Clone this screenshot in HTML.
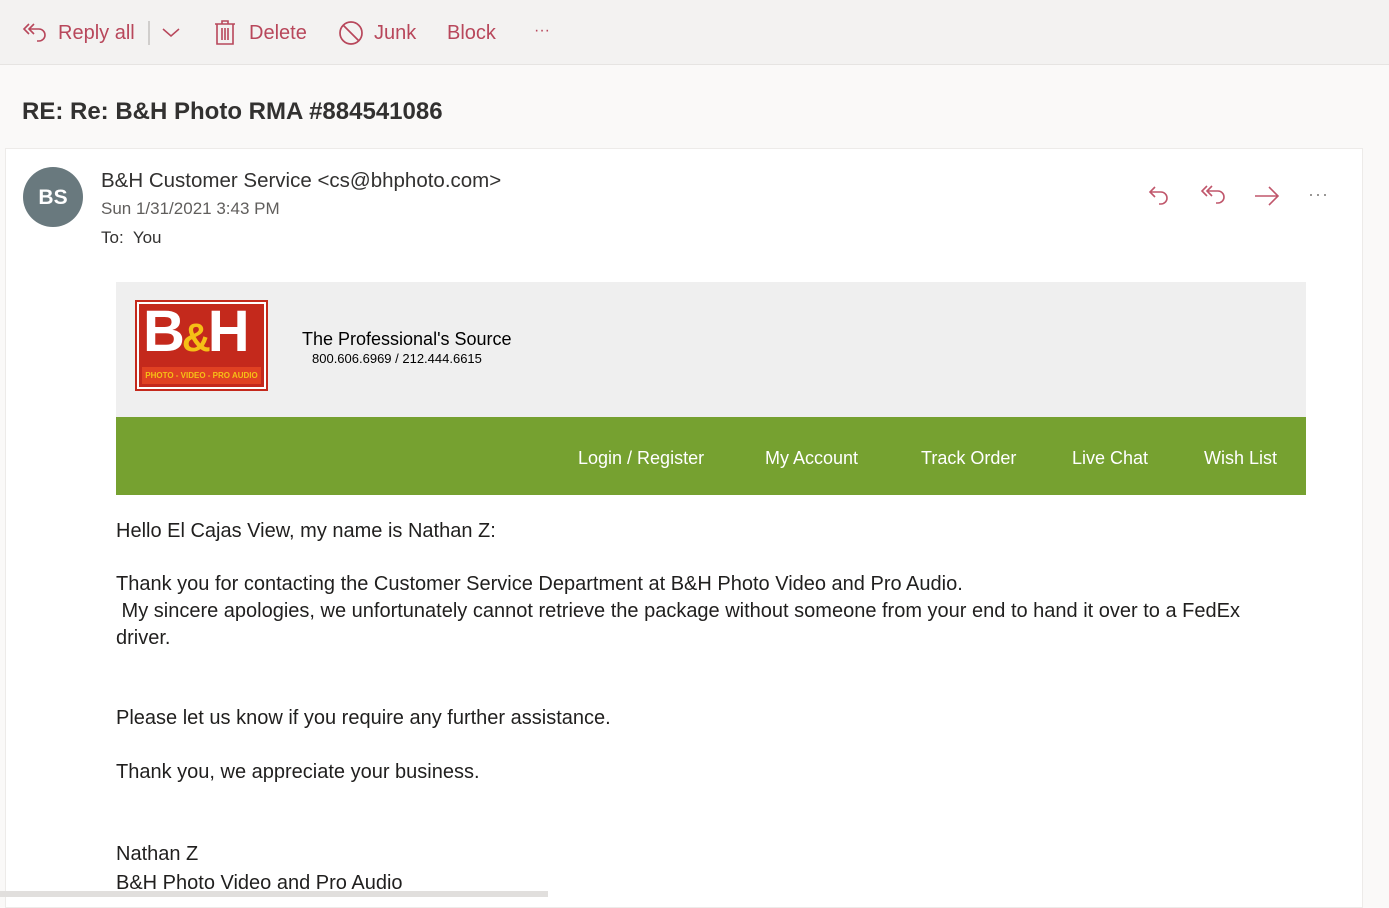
<!DOCTYPE html>
<html><head><meta charset="utf-8"><style>
*{margin:0;padding:0;box-sizing:border-box}
body{width:1389px;height:897px;overflow:hidden;background:#faf9f8;font-family:"Liberation Sans",sans-serif;position:relative;color:#201f1e}
.tb{position:absolute;left:0;top:0;width:1389px;height:65px;background:#f3f2f1;border-bottom:1px solid #e6e4e2}
.tb span{position:absolute;top:22px;font-size:20px;color:#b8475b}
.tb svg{position:absolute}
.subj{position:absolute;left:22px;top:98px;font-size:24px;font-weight:bold;color:#323130}
.card{position:absolute;left:5px;top:148px;width:1358px;height:760px;background:#fff;border:1px solid #edebe9}
.av{position:absolute;left:23px;top:167px;width:60px;height:60px;border-radius:50%;background:#69797e;color:#fff;font-size:21px;font-weight:bold;text-align:center;line-height:62px}
.t{position:absolute;white-space:nowrap}
.banner{position:absolute;left:116px;top:282px;width:1190px;height:135px;background:#efefef}
.nav{position:absolute;left:116px;top:417px;width:1190px;height:78px;background:#76a130}
.nav span{position:absolute;top:31px;color:#fff;font-size:18px}
.body{position:absolute;left:116px;font-size:20px;color:#201f1e;white-space:nowrap}
</style></head><body>
<div class="tb">
<svg style="left:22px;top:21px" width="26" height="24" viewBox="0 0 26 24" fill="none" stroke="#b8475b" stroke-width="1.6"><path d="M7 3 L2 8 L7 13"/><path d="M12 3 L7 8 L12 13"/><path d="M7 8 H17 A6 6 0 0 1 17 20 H15"/></svg>
<span style="left:58px">Reply all</span>
<div style="position:absolute;left:148px;top:21px;width:2px;height:24px;background:#d0cecc"></div>
<svg style="left:161px;top:27px" width="20" height="12" viewBox="0 0 20 12" fill="none" stroke="#b8475b" stroke-width="1.5"><path d="M2 2 L10 9 L18 2"/></svg>
<svg style="left:214px;top:20px" width="22" height="26" viewBox="0 0 22 26" fill="none" stroke="#b8475b" stroke-width="1.6"><path d="M1 4 H21 M8 4 V1 H14 V4 M3 4 V24 H19 V4 M8 8 V20 M11 8 V20 M14 8 V20"/></svg>
<span style="left:249px">Delete</span>
<svg style="left:338px;top:20px" width="26" height="26" viewBox="0 0 26 26" fill="none" stroke="#b8475b" stroke-width="1.7"><circle cx="13" cy="13" r="11"/><path d="M5 5 L21 21"/></svg>
<span style="left:374px">Junk</span>
<span style="left:447px">Block</span>
<span style="left:534px;top:22px;font-size:16px">···</span>
</div>
<div class="subj">RE: Re: B&amp;H Photo RMA #884541086</div>
<div class="card"></div>
<div class="av">BS</div>
<div class="t" style="left:101px;top:169px;font-size:20.5px;color:#323130">B&amp;H Customer Service &lt;cs@bhphoto.com&gt;</div>
<div class="t" style="left:101px;top:199px;font-size:17px;color:#605e5c">Sun 1/31/2021 3:43 PM</div>
<div class="t" style="left:101px;top:228px;font-size:17px;color:#323130">To:&nbsp; You</div>
<svg style="position:absolute;left:1148px;top:183px" width="24" height="24" viewBox="0 0 24 24" fill="none" stroke="#c0566b" stroke-width="1.6"><path d="M7 4 L2 9 L7 14"/><path d="M2 9 H13 A6 6 0 0 1 13 21 H11"/></svg>
<svg style="position:absolute;left:1200px;top:183px" width="28" height="24" viewBox="0 0 28 24" fill="none" stroke="#c0566b" stroke-width="1.6"><path d="M7 3 L2 8 L7 13"/><path d="M12 3 L7 8 L12 13"/><path d="M7 8 H18 A6 6 0 0 1 18 20 H16"/></svg>
<svg style="position:absolute;left:1253px;top:184px" width="28" height="24" viewBox="0 0 28 24" fill="none" stroke="#c0566b" stroke-width="1.6"><path d="M2 12 H25 M16 3 L25 12 L16 21"/></svg>
<div class="t" style="left:1308px;top:184px;font-size:18px;color:#8a8886;letter-spacing:1px">···</div>
<div class="banner"></div>
<div style="position:absolute;left:135px;top:300px;width:133px;height:91px;border:2px solid #c4291c;background:#fff;padding:2px">
 <div style="width:100%;height:100%;background:#c4291c;position:relative">
  <div style="position:absolute;left:4px;top:-6px;font-size:58px;font-weight:bold;color:#fff;letter-spacing:-3px;font-family:'Liberation Sans',sans-serif">B<span style="color:#f5c016;font-size:40px">&amp;</span>H</div>
  <div style="position:absolute;left:3px;right:3px;bottom:3px;height:17px;background:#e04122;color:#f5c016;font-size:8px;font-weight:bold;text-align:center;line-height:17px;white-space:nowrap;overflow:hidden">PHOTO - VIDEO - PRO AUDIO</div>
 </div>
</div>
<div class="t" style="left:302px;top:329px;font-size:18px;color:#000">The Professional's Source</div>
<div class="t" style="left:312px;top:351px;font-size:13px;color:#000">800.606.6969 / 212.444.6615</div>
<div class="nav">
<span style="left:462px">Login / Register</span>
<span style="left:649px">My Account</span>
<span style="left:805px">Track Order</span>
<span style="left:956px">Live Chat</span>
<span style="left:1088px">Wish List</span>
</div>
<div class="body" style="top:520px">Hello El Cajas View, my name is Nathan Z:</div>
<div class="body" style="top:573px">Thank you for contacting the Customer Service Department at B&amp;H Photo Video and Pro Audio.</div>
<div class="body" style="top:600px">&nbsp;My sincere apologies, we unfortunately cannot retrieve the package without someone from your end to hand it over to a FedEx</div>
<div class="body" style="top:627px">driver.</div>
<div class="body" style="top:707px">Please let us know if you require any further assistance.</div>
<div class="body" style="top:761px">Thank you, we appreciate your business.</div>
<div class="body" style="top:843px">Nathan Z</div>
<div class="body" style="top:872px">B&amp;H Photo Video and Pro Audio</div>
<div style="position:absolute;left:0;top:891px;width:548px;height:6px;background:#e1dfdd"></div>
</body></html>
